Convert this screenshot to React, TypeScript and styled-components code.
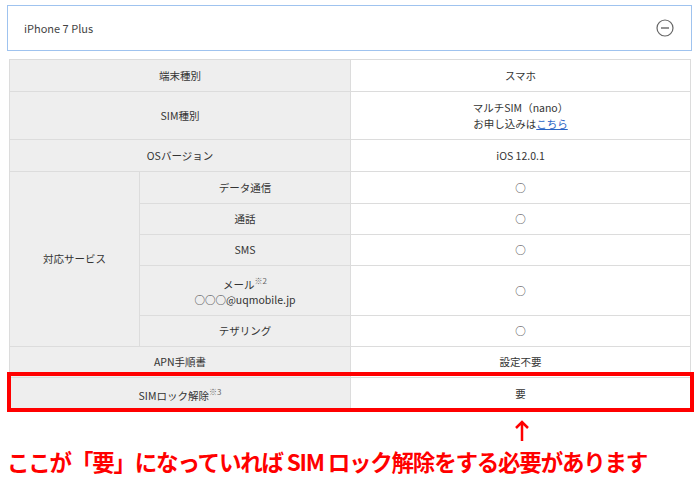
import React from 'react'
import styled, { createGlobalStyle } from 'styled-components'

const Global = createGlobalStyle`
  body { margin: 0; background: #fff; font-family: "Noto Sans CJK JP", "Noto Sans", sans-serif; }
`

const Page = styled.div`
  position: relative;
  width: 700px;
  height: 477px;
  padding: 5px 8px 0 7px;
  box-sizing: border-box;
`

const Header = styled.div`
  height: 46px;
  border: 1px solid #9fc3ef;
  display: flex;
  align-items: center;
  justify-content: space-between;
  padding: 0 17px 0 16px;
  font-size: 11px;
  color: #444;
  box-sizing: border-box;
`

const Table = styled.table`
  margin: 8px 0 0 2px;
  width: 682px;
  border-collapse: collapse;
  font-size: 10.5px;
  color: #333;
  text-align: center;
  td { border: 1px solid #dcdcdc; padding: 0; line-height: 16px; }
`

const Label = styled.td<{ $h: number }>`
  background: #eeeeee;
  height: ${p => p.$h - 1}px;
`

const Value = styled.td`
  background: #fff;
  width: 339px;
`

const Link = styled.a`
  color: #2a64c5;
  text-decoration: underline;
`

const Sup = styled.sup`
  font-size: 8px;
  color: #666;
`

const RedBox = styled.div`
  position: absolute;
  left: 7px;
  top: 372px;
  width: 687px;
  height: 40px;
  border: 4px solid #ff0000;
  box-sizing: border-box;
`

const Arrow = styled.div`
  display: flex;
  justify-content: flex-start;
  padding-left: 507px;
  margin-top: 10px;
  height: 22px;
`

const Note = styled.div`
  color: #ff0000;
  font-weight: bold;
  font-size: 22.5px;
  letter-spacing: -1.2px;
  white-space: nowrap;
  margin-top: 3px;
`

const App = () => (
  <Page>
    <Global />
    <Header>
      iPhone 7 Plus
      <svg width="18" height="18" viewBox="0 0 18 18">
        <circle cx="9" cy="9" r="8" fill="none" stroke="#666" strokeWidth="1.2" />
        <line x1="5" y1="9" x2="13" y2="9" stroke="#666" strokeWidth="1.4" />
      </svg>
    </Header>
    <Table>
      <tbody>
        <tr><Label $h={32} colSpan={2}>端末種別</Label><Value>スマホ</Value></tr>
        <tr><Label $h={48} colSpan={2}>SIM種別</Label><Value>マルチSIM（nano）<br />お申し込みは<Link>こちら</Link></Value></tr>
        <tr><Label $h={32} colSpan={2}>OSバージョン</Label><Value>iOS 12.0.1</Value></tr>
        <tr>
          <Label $h={32} rowSpan={5} style={{ width: 129 }}>対応サービス</Label>
          <Label $h={32}>データ通信</Label><Value>○</Value>
        </tr>
        <tr><Label $h={31}>通話</Label><Value>○</Value></tr>
        <tr><Label $h={31}>SMS</Label><Value>○</Value></tr>
        <tr><Label $h={50}>メール<Sup>※2</Sup><br />○○○@uqmobile.jp</Label><Value>○</Value></tr>
        <tr><Label $h={31}>テザリング</Label><Value>○</Value></tr>
        <tr><Label $h={31} colSpan={2}>APN手順書</Label><Value>設定不要</Value></tr>
        <tr><Label $h={32} colSpan={2}>SIMロック解除<Sup>※3</Sup></Label><Value>要</Value></tr>
      </tbody>
    </Table>
    <RedBox />
    <Arrow>
      <svg width="16" height="22" viewBox="0 0 16 22">
        <path d="M8 21V2M2 8l6-6 6 6" fill="none" stroke="#ff0000" strokeWidth="2.5" />
      </svg>
    </Arrow>
    <Note>ここが「要」になっていれば SIM ロック解除をする必要があります</Note>
  </Page>
)

export default App
